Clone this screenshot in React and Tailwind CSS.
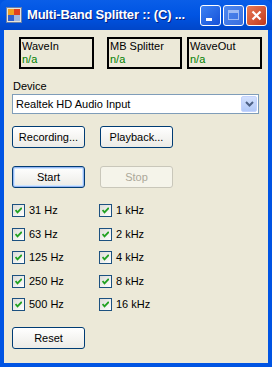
import React from 'react';

const font = { fontFamily: '"Liberation Sans", Arial, sans-serif' };

const XpButton = ({ children, isDefault, disabled }) => (
  <div
    className={`w-[73px] h-[22px] rounded-[3px] border flex items-center justify-center text-[11px] ${
      disabled
        ? 'border-[#C9C7BA] bg-[#F5F4EA] text-[#ACA899]'
        : 'border-[#003C74] bg-gradient-to-b from-white to-[#ECEBE6] text-black'
    } ${isDefault ? 'shadow-[inset_0_0_0_1px_#97B6F3,inset_0_0_0_2px_#CEE7FF]' : ''}`}
  >
    {children}
  </div>
);

const Check = ({ label }) => (
  <div className="flex items-center h-[13px]">
    <div className="w-[13px] h-[13px] border border-[#1C5180] bg-gradient-to-br from-[#DCDCD7] to-white flex items-center justify-center">
      <svg width="7" height="7" viewBox="0 0 7 7">
        <path d="M0.5 3 L2.5 5.3 L6.8 0.8" stroke="#21A121" strokeWidth="1.9" fill="none" />
      </svg>
    </div>
    <span className="ml-[4px] text-[11px] text-black leading-[13px]">{label}</span>
  </div>
);

const Status = ({ title, className }) => (
  <div className={`w-[75px] h-[32px] border-2 border-black px-[1px] text-[11px] leading-[13px] ${className}`}>
    <div className="mt-[1px] text-black">{title}</div>
    <div className="text-[#008000]">n/a</div>
  </div>
);

const TitleBtn = ({ children, className }) => (
  <div className={`w-[21px] h-[21px] rounded-[3px] border border-white flex items-center justify-center ${className}`}>
    {children}
  </div>
);

export default function App() {
  const left = ['31 Hz', '63 Hz', '125 Hz', '250 Hz', '500 Hz'];
  const right = ['1 kHz', '2 kHz', '4 kHz', '8 kHz', '16 kHz'];
  return (
    <div className="w-[272px] h-[367px] flex flex-col bg-[#0054E3]" style={font}>
      <div className="h-[30px] flex items-center rounded-t-[7px] bg-gradient-to-b from-[#0A5EE8] via-[#0054E3] to-[#0046C9] pl-[6px] pr-[5px]">
        <svg width="16" height="16" viewBox="0 0 16 16">
          <rect x="0.5" y="0.5" width="15" height="15" fill="#E8E4D8" stroke="#6A7FA8" />
          <rect x="2" y="2" width="6" height="6" fill="#F0A020" />
          <rect x="8" y="2" width="6" height="6" fill="#E04020" />
          <rect x="2" y="8" width="6" height="6" fill="#3060D0" />
          <rect x="8" y="8" width="6" height="6" fill="#A0B8E0" />
        </svg>
        <div className="ml-[5px] text-white font-bold text-[13px] tracking-[-0.2px] [text-shadow:1px_1px_0_#0A1E7A]">
          Multi-Band Splitter :: (C) ...
        </div>
        <div className="ml-auto flex gap-[2px]">
          <TitleBtn className="bg-gradient-to-br from-[#3C81F3] to-[#1650D8]">
            <div className="w-[6px] h-[3px] bg-white mt-[8px] -ml-[4px]" />
          </TitleBtn>
          <TitleBtn className="bg-gradient-to-br from-[#4E88EE] to-[#3A6FE0] border-[#8CB0F0]">
            <div className="w-[11px] h-[10px] border border-[#9EBCF5] border-t-[3px]" />
          </TitleBtn>
          <TitleBtn className="bg-gradient-to-br from-[#E97A55] to-[#C2371B]">
            <svg width="11" height="11" viewBox="0 0 11 11">
              <path d="M1.5 1.5 L9.5 9.5 M9.5 1.5 L1.5 9.5" stroke="white" strokeWidth="2.2" />
            </svg>
          </TitleBtn>
        </div>
      </div>
      <div className="flex-1 mx-[4px] mb-[4px] bg-[#ECE9D8] pl-[8px] text-[11px] text-black">
        <div className="flex mt-[7px] ml-[7px]">
          <Status title="WaveIn" />
          <Status title="MB Splitter" className="ml-[13px]" />
          <Status title="WaveOut" className="ml-[5px]" />
        </div>
        <div className="mt-[11px] ml-[1px] leading-[13px]">Device</div>
        <div className="mt-[1px] w-[247px] h-[20px] border border-[#7F9DB9] bg-white flex items-center">
          <span className="ml-[3px]">Realtek HD Audio Input</span>
          <div className="ml-auto mr-[1px] w-[16px] h-[16px] rounded-[2px] bg-gradient-to-b from-[#D3E0FD] to-[#B2C9F8] border border-[#C3D3FD] flex items-center justify-center">
            <svg width="9" height="6" viewBox="0 0 9 6">
              <path d="M1 1 L4.5 4.5 L8 1" stroke="#4D6185" strokeWidth="2" fill="none" />
            </svg>
          </div>
        </div>
        <div className="flex mt-[12px] gap-[15px]">
          <XpButton>Recording...</XpButton>
          <XpButton>Playback...</XpButton>
        </div>
        <div className="flex mt-[18px] gap-[15px]">
          <XpButton isDefault>Start</XpButton>
          <XpButton disabled>Stop</XpButton>
        </div>
        <div className="flex mt-[16px]">
          <div className="w-[87px] flex flex-col gap-[10.5px]">
            {left.map((l) => <Check key={l} label={l} />)}
          </div>
          <div className="flex flex-col gap-[10.5px]">
            {right.map((l) => <Check key={l} label={l} />)}
          </div>
        </div>
        <div className="mt-[16px]">
          <XpButton>Reset</XpButton>
        </div>
      </div>
    </div>
  );
}
